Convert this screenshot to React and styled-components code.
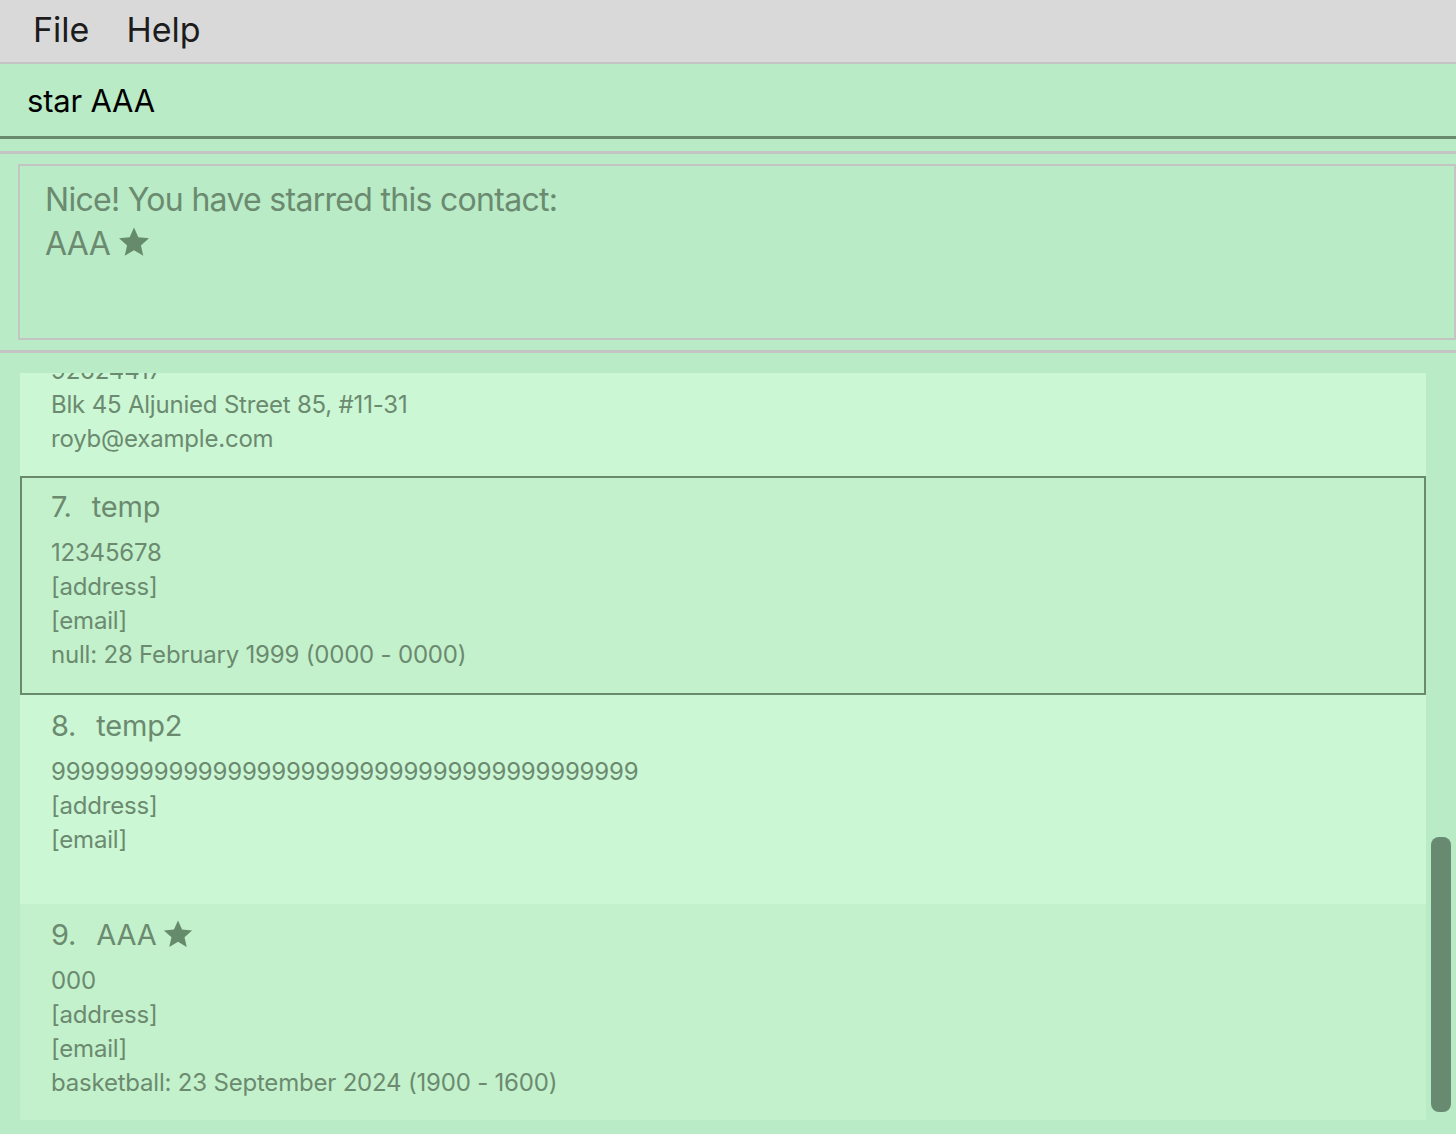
import React from "react";
import styled, { createGlobalStyle } from "styled-components";

const GlobalStyle = createGlobalStyle`
  html, body {
    margin: 0;
    padding: 0;
    height: 100%;
    background: #b8ebc6;
    font-family: Inter, "Noto Sans", "Liberation Sans", sans-serif;
    overflow: hidden;
  }
  #root {
    height: 100%;
  }
  * {
    box-sizing: border-box;
  }
`;

const Window = styled.div`
  display: flex;
  flex-direction: column;
  height: 1134px;
  background: #b8ebc6;
`;

const MenuBar = styled.div`
  display: flex;
  align-items: center;
  gap: 37px;
  height: 64px;
  padding: 0 33px 4px;
  background: #d9d9d9;
  border-bottom: 2px solid #c4c4c4;
  color: #1c1c1c;
  font-size: 34px;
`;

const CommandBox = styled.div`
  display: flex;
  align-items: center;
  height: 75px;
  padding: 0 27px;
  border-bottom: 3px solid #6a8a6e;
  color: #000;
  font-size: 31px;
  letter-spacing: -0.2px;
`;

const Divider = styled.div`
  height: 3px;
  background: #c4c4c4;
  margin-top: ${(p) => p.$top || 0}px;
`;

const ResultPane = styled.div`
  padding: 10px 0 10px 18px;
`;

const ResultBox = styled.div`
  height: 176px;
  border: 2px solid #c4c4c4;
  padding: 12px 25px;
  color: #6b8a6f;
  font-size: 32px;
  line-height: 44px;
  letter-spacing: -0.7px;
`;

const ListArea = styled.div`
  flex: 1;
  display: flex;
  min-height: 0;
  padding: 20px 0 14px 20px;
`;

const ListView = styled.div`
  flex: 1;
  display: flex;
  flex-direction: column;
  justify-content: flex-end;
  overflow: hidden;
`;

const Card = styled.div`
  flex-shrink: 0;
  padding: ${(p) => (p.$selected ? "6px 29px 21px" : "8px 31px 20px")};
  background: ${(p) => (p.$shade ? "#c3f1cc" : "#cbf7d5")};
  border: ${(p) => (p.$selected ? "2px solid #6a8a6e" : "none")};
  color: #6b8a6f;
`;

const Name = styled.div`
  display: flex;
  align-items: center;
  height: 44px;
  font-size: 29px;
  letter-spacing: -0.2px;
`;

const Index = styled.span`
  margin-right: 20px;
`;

const Details = styled.div`
  margin-top: 8px;
`;

const Line = styled.div`
  height: ${(p) => p.$h || 34}px;
  line-height: 34px;
  font-size: 24px;
  letter-spacing: -0.2px;
  white-space: nowrap;
`;

const Star = styled.svg`
  width: ${(p) => p.$size}px;
  height: ${(p) => p.$size}px;
  margin-left: ${(p) => p.$gap}px;
  fill: #668a6c;
  vertical-align: ${(p) => p.$align || "middle"};
`;

const ScrollTrack = styled.div`
  width: 30px;
  display: flex;
  flex-direction: column;
  justify-content: flex-end;
  align-items: center;
  padding-bottom: 8px;
`;

const Thumb = styled.div`
  width: 20px;
  border-radius: 8px;
  background: #688a70;
`;

function StarIcon({ size, gap, align }) {
  return (
    <Star viewBox="0 0 24 24" $size={size} $gap={gap} $align={align}>
      <path d="M12 1.8l3.05 6.9 7.5.72-5.66 4.98 1.66 7.36L12 17.9l-6.55 3.86 1.66-7.36L1.45 9.42l7.5-.72z" />
    </Star>
  );
}

const contacts = [
  {
    id: 6,
    lines: ["92624417", "Blk 45 Aljunied Street 85, #11-31", "royb@example.com"],
  },
  {
    id: 7,
    name: "temp",
    lines: ["12345678", "[address]", "[email]", "null: 28 February 1999 (0000 - 0000)"],
    selected: true,
  },
  {
    id: 8,
    name: "temp2",
    lines: ["9999999999999999999999999999999999999999", "[address]", "[email]"],
    filler: 27,
  },
  {
    id: 9,
    name: "AAA",
    starred: true,
    lines: ["000", "[address]", "[email]", "basketball: 23 September 2024 (1900 - 1600)"],
  },
];

export default function App() {
  const thumbHeight = 275;
  return (
    <>
      <GlobalStyle />
      <Window>
        <MenuBar>
          <span>File</span>
          <span>Help</span>
        </MenuBar>
        <CommandBox>star AAA</CommandBox>
        <Divider $top={12} />
        <ResultPane>
          <ResultBox>
            <div>Nice! You have starred this contact:</div>
            <div>
              AAA
              <StarIcon size={34} gap={7} align="-4px" />
            </div>
          </ResultBox>
        </ResultPane>
        <Divider />
        <ListArea>
          <ListView>
            {contacts.map((c) => (
              <Card key={c.id} $shade={c.id % 2 === 1} $selected={c.selected}>
                {c.name && (
                  <Name>
                    <Index>{c.id}.</Index>
                    {c.name}
                    {c.starred && <StarIcon size={32} gap={5} />}
                  </Name>
                )}
                <Details>
                  {c.lines.map((l, i) => (
                    <Line key={i}>{l}</Line>
                  ))}
                  {c.filler && <Line $h={c.filler} />}
                </Details>
              </Card>
            ))}
          </ListView>
          <ScrollTrack>
            <Thumb style={{ height: thumbHeight }} />
          </ScrollTrack>
        </ListArea>
      </Window>
    </>
  );
}
